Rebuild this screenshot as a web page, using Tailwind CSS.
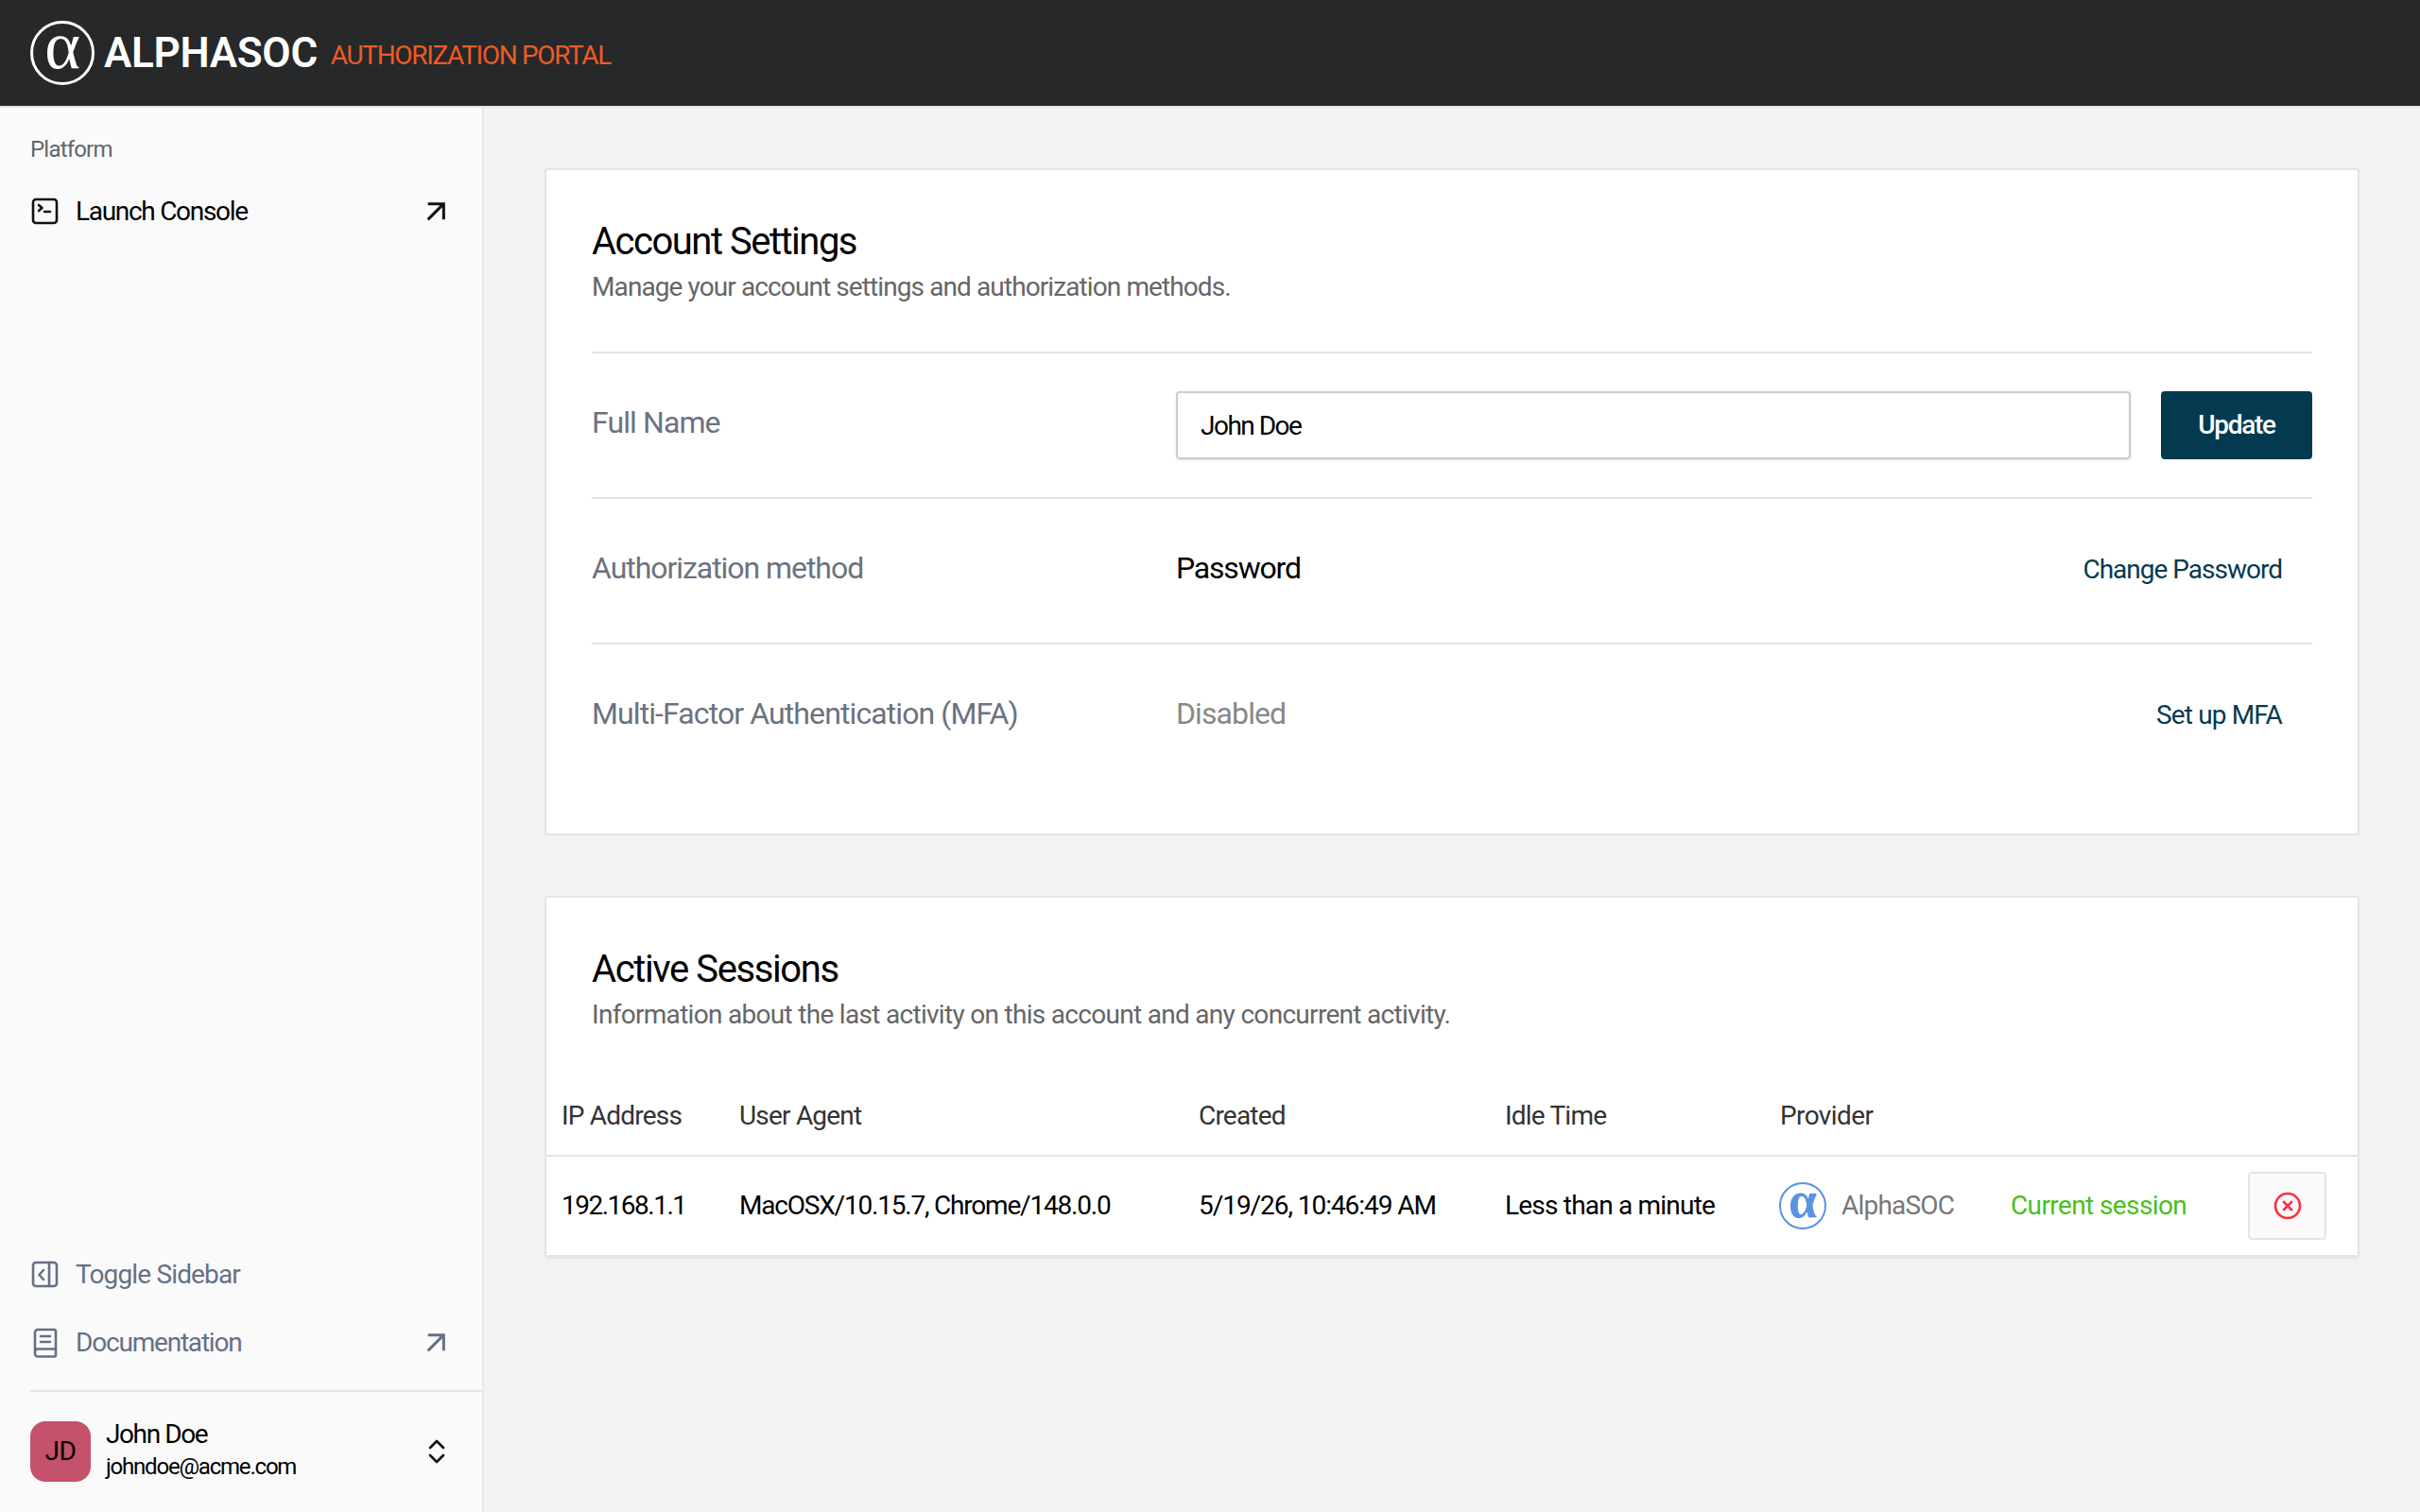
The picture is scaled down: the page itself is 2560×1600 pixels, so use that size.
<!DOCTYPE html>
<html lang="en">
<head>
    <meta charset="UTF-8">
    <title>AlphaSOC Authorization Portal</title>
    <script src="https://cdn.jsdelivr.net/npm/@tailwindcss/browser@4"></script>
</head>
<body class="h-screen overflow-hidden flex flex-col bg-[#f2f2f2] text-black font-['Roboto',sans-serif]">
    <header class="h-[114px] shrink-0 flex items-center bg-[#26282a] border-b-2 border-[#e5e5e5] pl-[32px]">
        <div class="w-[68px] h-[68px] shrink-0 rounded-full border-[3px] border-white flex items-center justify-center text-white font-['Liberation_Serif',serif] text-[72px] leading-none">
            <span class="-mt-[16px]">α</span>
        </div>
        <span class="ml-[10px] text-[44px] leading-none font-semibold text-white tracking-[-0.3px]">ALPHASOC</span>
        <span class="ml-[14px] mt-[5px] text-[28px] leading-none text-[#f05a22] tracking-[-1.35px]">AUTHORIZATION PORTAL</span>
    </header>
    <div class="flex-1 flex min-h-0">
        <aside class="w-[512px] shrink-0 flex flex-col bg-[#fafafa] border-r-2 border-[#e8e8e8]">
            <div class="pl-[32px] pt-[24px] leading-[40px] text-[24px] text-[#666] tracking-[-0.8px]">Platform</div>
            <a class="mt-[10px] flex items-center h-[72px] pl-[32px] pr-[32px] text-[28px] tracking-[-1.3px]">
                <svg class="w-[32px] h-[32px] mr-[16px]" viewBox="0 0 32 32" fill="none" stroke="#111" stroke-width="2.6" stroke-linecap="round" stroke-linejoin="round">
                    <rect x="3" y="3" width="25" height="25" rx="3"/>
                    <path d="M9 9l3.5 3L9 15M15 16h6"/>
                </svg>
                Launch Console
                <svg class="w-[40px] h-[40px] ml-auto -mr-[3px]" viewBox="0 0 24 24" fill="none" stroke="#111" stroke-width="1.8"><path d="M7 17 17 7M7 7h10v10"/></svg>
            </a>
            <div class="mt-auto">
                <a class="flex items-center h-[72px] pl-[32px] pr-[32px] text-[28px] text-[#667085] tracking-[-0.85px]">
                    <svg class="w-[32px] h-[32px] mr-[16px]" viewBox="0 0 32 32" fill="none" stroke="#667085" stroke-width="2.6" stroke-linecap="round" stroke-linejoin="round">
                        <rect x="3" y="3" width="25" height="25" rx="3"/>
                        <path d="M20 3v25M14 11l-4.500 5 4.500 5"/>
                    </svg>
                    Toggle Sidebar
                </a>
                <a class="flex items-center h-[72px] pl-[32px] pr-[32px] text-[28px] text-[#667085] tracking-[-1.2px]">
                    <svg class="w-[32px] h-[32px] mr-[16px]" viewBox="0 0 32 32" fill="none" stroke="#667085" stroke-width="2.6" stroke-linecap="round" stroke-linejoin="round">
                        <path d="M5 25V5a3 3 0 0 1 3-3h17a2 2 0 0 1 2 2v25a1.500 1.500 0 0 1-1.500 1.500H8a3 3 0 0 1-3-3v-2a3 3 0 0 1 3-3h19"/>
                        <path d="M11 9h10M11 15h10"/>
                    </svg>
                    Documentation
                    <svg class="w-[40px] h-[40px] ml-auto -mr-[3px]" viewBox="0 0 24 24" fill="none" stroke="#667085" stroke-width="1.800"><path d="M7 17 17 7M7 7h10v10"/></svg>
                </a>
                <div class="mt-[14px] ml-[32px] h-[2px] bg-[#e5e5e5]"></div>
                <div class="h-[127px] flex items-center pl-[32px] pr-[32px] pb-[2px]">
                    <div class="w-[64px] h-[64px] rounded-[16px] bg-[#c5526c] flex items-center justify-center text-[28px] tracking-[-0.5px]">JD</div>
                    <div class="ml-[16px] -mt-[4px]">
                        <div class="text-[28px] leading-[36px] tracking-[-1.4px]">John Doe</div>
                        <div class="text-[24px] leading-[32px] tracking-[-1.2px]">johndoe@acme.com</div>
                    </div>
                    <svg class="w-[32px] h-[32px] ml-auto" viewBox="0 0 32 32" fill="none" stroke="#111" stroke-width="2.6" stroke-linecap="round" stroke-linejoin="round"><path d="M9 12l7-7 7 7M9 20l7 7 7-7"/></svg>
                </div>
            </div>
        </aside>
        <main class="flex-1 pl-[64px] pr-[64px] pt-[64px]">
            <section class="bg-white border-2 border-[#e5e5e5] rounded-[4px] h-[706px] px-[48px]">
                <h2 class="pt-[52px] text-[40px] leading-[48px] tracking-[-1.5px]">Account Settings</h2>
                <p class="mt-[4px] text-[28px] leading-[40px] text-[#666] tracking-[-0.9px]">Manage your account settings and authorization methods.</p>
                <div class="mt-[48px] h-[154px] flex items-start pt-[40px] border-t-2 border-[#e5e5e5]">
                    <div class="w-[618px] mt-[9px] text-[32px] leading-[48px] text-[#6b7280] tracking-[-0.9px]">Full Name</div>
                    <input class="flex-1 h-[72px] border-2 border-[#ccc] rounded-[4px] px-[24px] text-[28px] text-black tracking-[-1.5px] shadow-sm" value="John Doe">
                    <button class="ml-[32px] w-[160px] h-[72px] rounded-[4px] bg-[#033a50] text-white text-[28px] font-medium tracking-[-1.3px]">Update</button>
                </div>
                <div class="h-[154px] flex items-start pt-[49px] border-t-2 border-[#e5e5e5]">
                    <div class="w-[618px] text-[32px] leading-[48px] text-[#6b7280] tracking-[-1.05px]">Authorization method</div>
                    <div class="text-[32px] leading-[48px] tracking-[-1.2px]">Password</div>
                    <a class="ml-auto mr-[32px] mt-[2px] text-[28px] leading-[48px] text-[#033a50] tracking-[-1px]">Change Password</a>
                </div>
                <div class="flex items-start pt-[49px] border-t-2 border-[#e5e5e5]">
                    <div class="w-[618px] text-[32px] leading-[48px] text-[#6b7280] tracking-[-0.9px]">Multi-Factor Authentication (MFA)</div>
                    <div class="text-[32px] leading-[48px] text-[#888] tracking-[-0.9px]">Disabled</div>
                    <a class="ml-auto mr-[32px] mt-[2px] text-[28px] leading-[48px] text-[#033a50] tracking-[-0.85px]">Set up MFA</a>
                </div>
            </section>
            <section class="mt-[64px] bg-white border-2 border-b-4 border-[#e5e5e5] rounded-[4px] h-[384px]">
                <h2 class="pl-[48px] pt-[52px] text-[40px] leading-[48px] tracking-[-1.4px]">Active Sessions</h2>
                <p class="pl-[48px] mt-[4px] text-[28px] leading-[40px] text-[#666] tracking-[-0.7px]">Information about the last activity on this account and any concurrent activity.</p>
                <table class="mt-[46px] w-full table-fixed text-[28px] tracking-[-0.8px]">
                    <colgroup>
                        <col class="w-[188px]"><col class="w-[486px]"><col class="w-[324px]"><col class="w-[291px]"><col class="w-[244px]"><col class="w-[251px]"><col>
                    </colgroup>
                    <thead>
                        <tr class="h-[83px] border-b-2 border-[#e5e5e5] text-left text-[#333]">
                            <th class="pl-[16px] font-normal">IP Address</th>
                            <th class="pl-[16px] font-normal">User Agent</th>
                            <th class="pl-[16px] font-normal">Created</th>
                            <th class="pl-[16px] font-normal">Idle Time</th>
                            <th class="pl-[16px] font-normal tracking-[-0.6px]">Provider</th>
                            <th></th>
                            <th></th>
                        </tr>
                    </thead>
                    <tbody>
                        <tr class="h-[104px]">
                            <td class="pl-[16px] tracking-[-1.5px]">192.168.1.1</td>
                            <td class="pl-[16px] tracking-[-1.2px]">MacOSX/10.15.7, Chrome/148.0.0</td>
                            <td class="pl-[16px] tracking-[-1.05px]">5/19/26, 10:46:49 AM</td>
                            <td class="pl-[16px]">Less than a minute</td>
                            <td class="pl-[16px]">
                                <div class="flex items-center text-[#777]">
                                    <div class="w-[50px] h-[50px] shrink-0 mr-[16px] -ml-[1px] rounded-full border-2 border-[#5a93e0] flex items-center justify-center text-[#5a93e0] font-['Liberation_Serif',serif] font-bold text-[54px] leading-none tracking-normal">
                                        <span class="-mt-[12px]">α</span>
                                    </div>
                                    AlphaSOC
                                </div>
                            </td>
                            <td class="pl-[16px] text-[#4cbf1a] tracking-[-0.6px]">Current session</td>
                            <td class="pl-[16px]">
                                <button class="w-[83px] h-[72px] flex items-center justify-center bg-[#fafafa] border-2 border-[#e5e5e5] rounded-[4px]">
                                    <svg class="w-[32px] h-[32px]" viewBox="0 0 32 32" fill="none" stroke="#ff2d3f" stroke-width="2.600" stroke-linecap="round"><circle cx="16" cy="16" r="13"/><path d="M12 12l8 8M20 12l-8 8"/></svg>
                                </button>
                            </td>
                        </tr>
                    </tbody>
                </table>
            </section>
        </main>
    </div>
</body>
</html>
